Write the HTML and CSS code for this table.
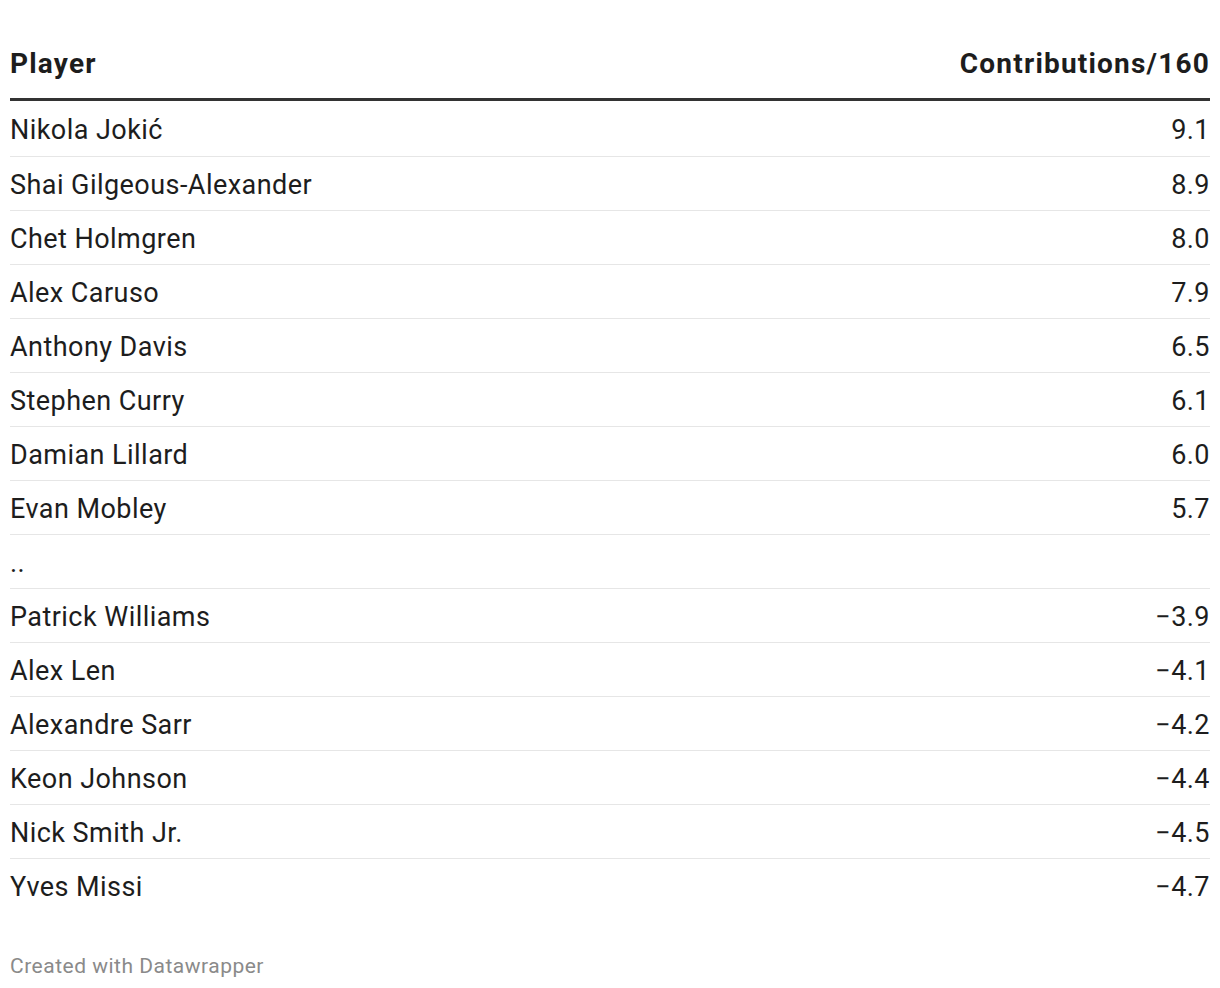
FILE: index.html
```html
<!DOCTYPE html>
<html lang="en">
<head>
<meta charset="utf-8">
<title>Contributions/160</title>
<link rel="stylesheet" href="styles.css">
</head>
<body>
<div class="chart">
  <table class="dw-table">
    <thead>
      <tr><th class="col-name">Player</th><th class="col-num">Contributions/160</th></tr>
    </thead>
    <tbody>
      <tr><td class="col-name">Nikola Jokić</td><td class="col-num">9.1</td></tr>
      <tr><td class="col-name">Shai Gilgeous-Alexander</td><td class="col-num">8.9</td></tr>
      <tr><td class="col-name">Chet Holmgren</td><td class="col-num">8.0</td></tr>
      <tr><td class="col-name">Alex Caruso</td><td class="col-num">7.9</td></tr>
      <tr><td class="col-name">Anthony Davis</td><td class="col-num">6.5</td></tr>
      <tr><td class="col-name">Stephen Curry</td><td class="col-num">6.1</td></tr>
      <tr><td class="col-name">Damian Lillard</td><td class="col-num">6.0</td></tr>
      <tr><td class="col-name">Evan Mobley</td><td class="col-num">5.7</td></tr>
      <tr><td class="col-name">..</td><td class="col-num"></td></tr>
      <tr><td class="col-name">Patrick Williams</td><td class="col-num">−3.9</td></tr>
      <tr><td class="col-name">Alex Len</td><td class="col-num">−4.1</td></tr>
      <tr><td class="col-name">Alexandre Sarr</td><td class="col-num">−4.2</td></tr>
      <tr><td class="col-name">Keon Johnson</td><td class="col-num">−4.4</td></tr>
      <tr><td class="col-name">Nick Smith Jr.</td><td class="col-num">−4.5</td></tr>
      <tr><td class="col-name">Yves Missi</td><td class="col-num">−4.7</td></tr>
    </tbody>
  </table>
  <div class="footer">Created with Datawrapper</div>
</div>
</body>
</html>
```

FILE: styles.css
```css
html, body {
  margin: 0;
  padding: 0;
  background: #ffffff;
}

body {
  font-family: Roboto, "Liberation Sans", Arial, sans-serif;
  color: #1d1d1d;
}

.chart {
  padding: 40px 10px 0 10px;
}

.dw-table {
  width: 100%;
  border-collapse: collapse;
  font-size: 27px;
  letter-spacing: 0.45px;
}

.dw-table th {
  font-size: 28px;
  font-weight: 700;
  letter-spacing: 1.2px;
  height: 47px;
  padding: 0 0 11px 0;
  line-height: 32px;
  vertical-align: middle;
  border-bottom: 3px solid #333333;
}

.dw-table td {
  height: 51px;
  padding: 2px 0 0 0;
  line-height: 30px;
  vertical-align: middle;
  border-bottom: 1px solid #e6e6e6;
}

.dw-table tbody tr:first-child td {
  height: 53px;
}

.dw-table tbody tr:last-child td {
  border-bottom: none;
}

.col-name {
  text-align: left;
}

.col-num {
  text-align: right;
}

.footer {
  margin-top: 42px;
  font-size: 21px;
  letter-spacing: 0.5px;
  color: #8a8a8a;
}
```
